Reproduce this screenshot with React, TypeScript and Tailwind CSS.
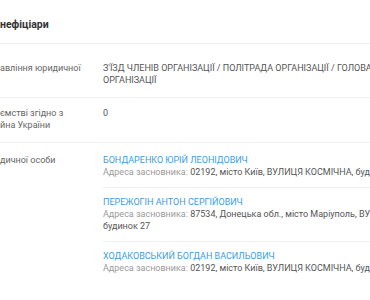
import React from "react";

const font = { fontFamily: "Roboto, 'Noto Sans', sans-serif" };

function Entry({
  name,
  lines,
  first,
  last,
}: {
  name: string;
  lines: string[];
  first?: boolean;
  last?: boolean;
}) {
  return (
    <div
      className={`${first ? "pt-0" : "pt-[8px]"} pb-[9px] ${
        last ? "" : "border-b border-[#efefef]"
      }`}
    >
      <div className="text-[#3e9be0] leading-[12px] whitespace-nowrap">{name}</div>
      {lines.map((l, i) => (
        <div key={i} className="leading-[12px] whitespace-nowrap text-[#555]">
          {i === 0 ? (
            <>
              <span className="text-[#9a9a9a]">Адреса засновника:</span> {l}
            </>
          ) : (
            l
          )}
        </div>
      ))}
    </div>
  );
}

export default function App() {
  return (
    <div className="w-[370px] h-[300px] overflow-hidden bg-white text-[9px]" style={font}>
      <div className="pt-[18px] pb-[11px] border-b border-[#f0f0f0]">
        <div className="text-[10.5px] leading-[14px] font-bold text-[#333] whitespace-nowrap">
          нефіціари
        </div>
      </div>

      <div className="grid grid-cols-[103px_1fr] pt-[18px] pb-[11px] border-b border-[#f0f0f0] leading-[12px]">
        <div className="text-[#666] whitespace-nowrap">авління юридичної</div>
        <div className="text-[#555] whitespace-nowrap">
          <div>З'ЇЗД ЧЛЕНІВ ОРГАНІЗАЦІЇ / ПОЛІТРАДА ОРГАНІЗАЦІЇ / ГОЛОВА</div>
          <div>ОРГАНІЗАЦІЇ</div>
        </div>
      </div>

      <div className="grid grid-cols-[103px_1fr] pt-[9px] pb-[11px] border-b border-[#f0f0f0] leading-[12px]">
        <div className="text-[#666] whitespace-nowrap">
          <div>ємстві згідно з</div>
          <div>йна України</div>
        </div>
        <div className="text-[#555]">0</div>
      </div>

      <div className="grid grid-cols-[103px_1fr] pt-[11px] leading-[12px]">
        <div className="text-[#666] whitespace-nowrap">дичної особи</div>
        <div>
          <Entry
            first
            name="БОНДАРЕНКО ЮРІЙ ЛЕОНІДОВИЧ"
            lines={["02192, місто Київ, ВУЛИЦЯ КОСМІЧНА, будинок 12"]}
          />
          <Entry
            name="ПЕРЕЖОГІН АНТОН СЕРГІЙОВИЧ"
            lines={["87534, Донецька обл., місто Маріуполь, ВУЛИЦЯ МИРУ,", "будинок 27"]}
          />
          <Entry
            last
            name="ХОДАКОВСЬКИЙ БОГДАН ВАСИЛЬОВИЧ"
            lines={["02192, місто Київ, ВУЛИЦЯ КОСМІЧНА, будинок 12"]}
          />
        </div>
      </div>
    </div>
  );
}
